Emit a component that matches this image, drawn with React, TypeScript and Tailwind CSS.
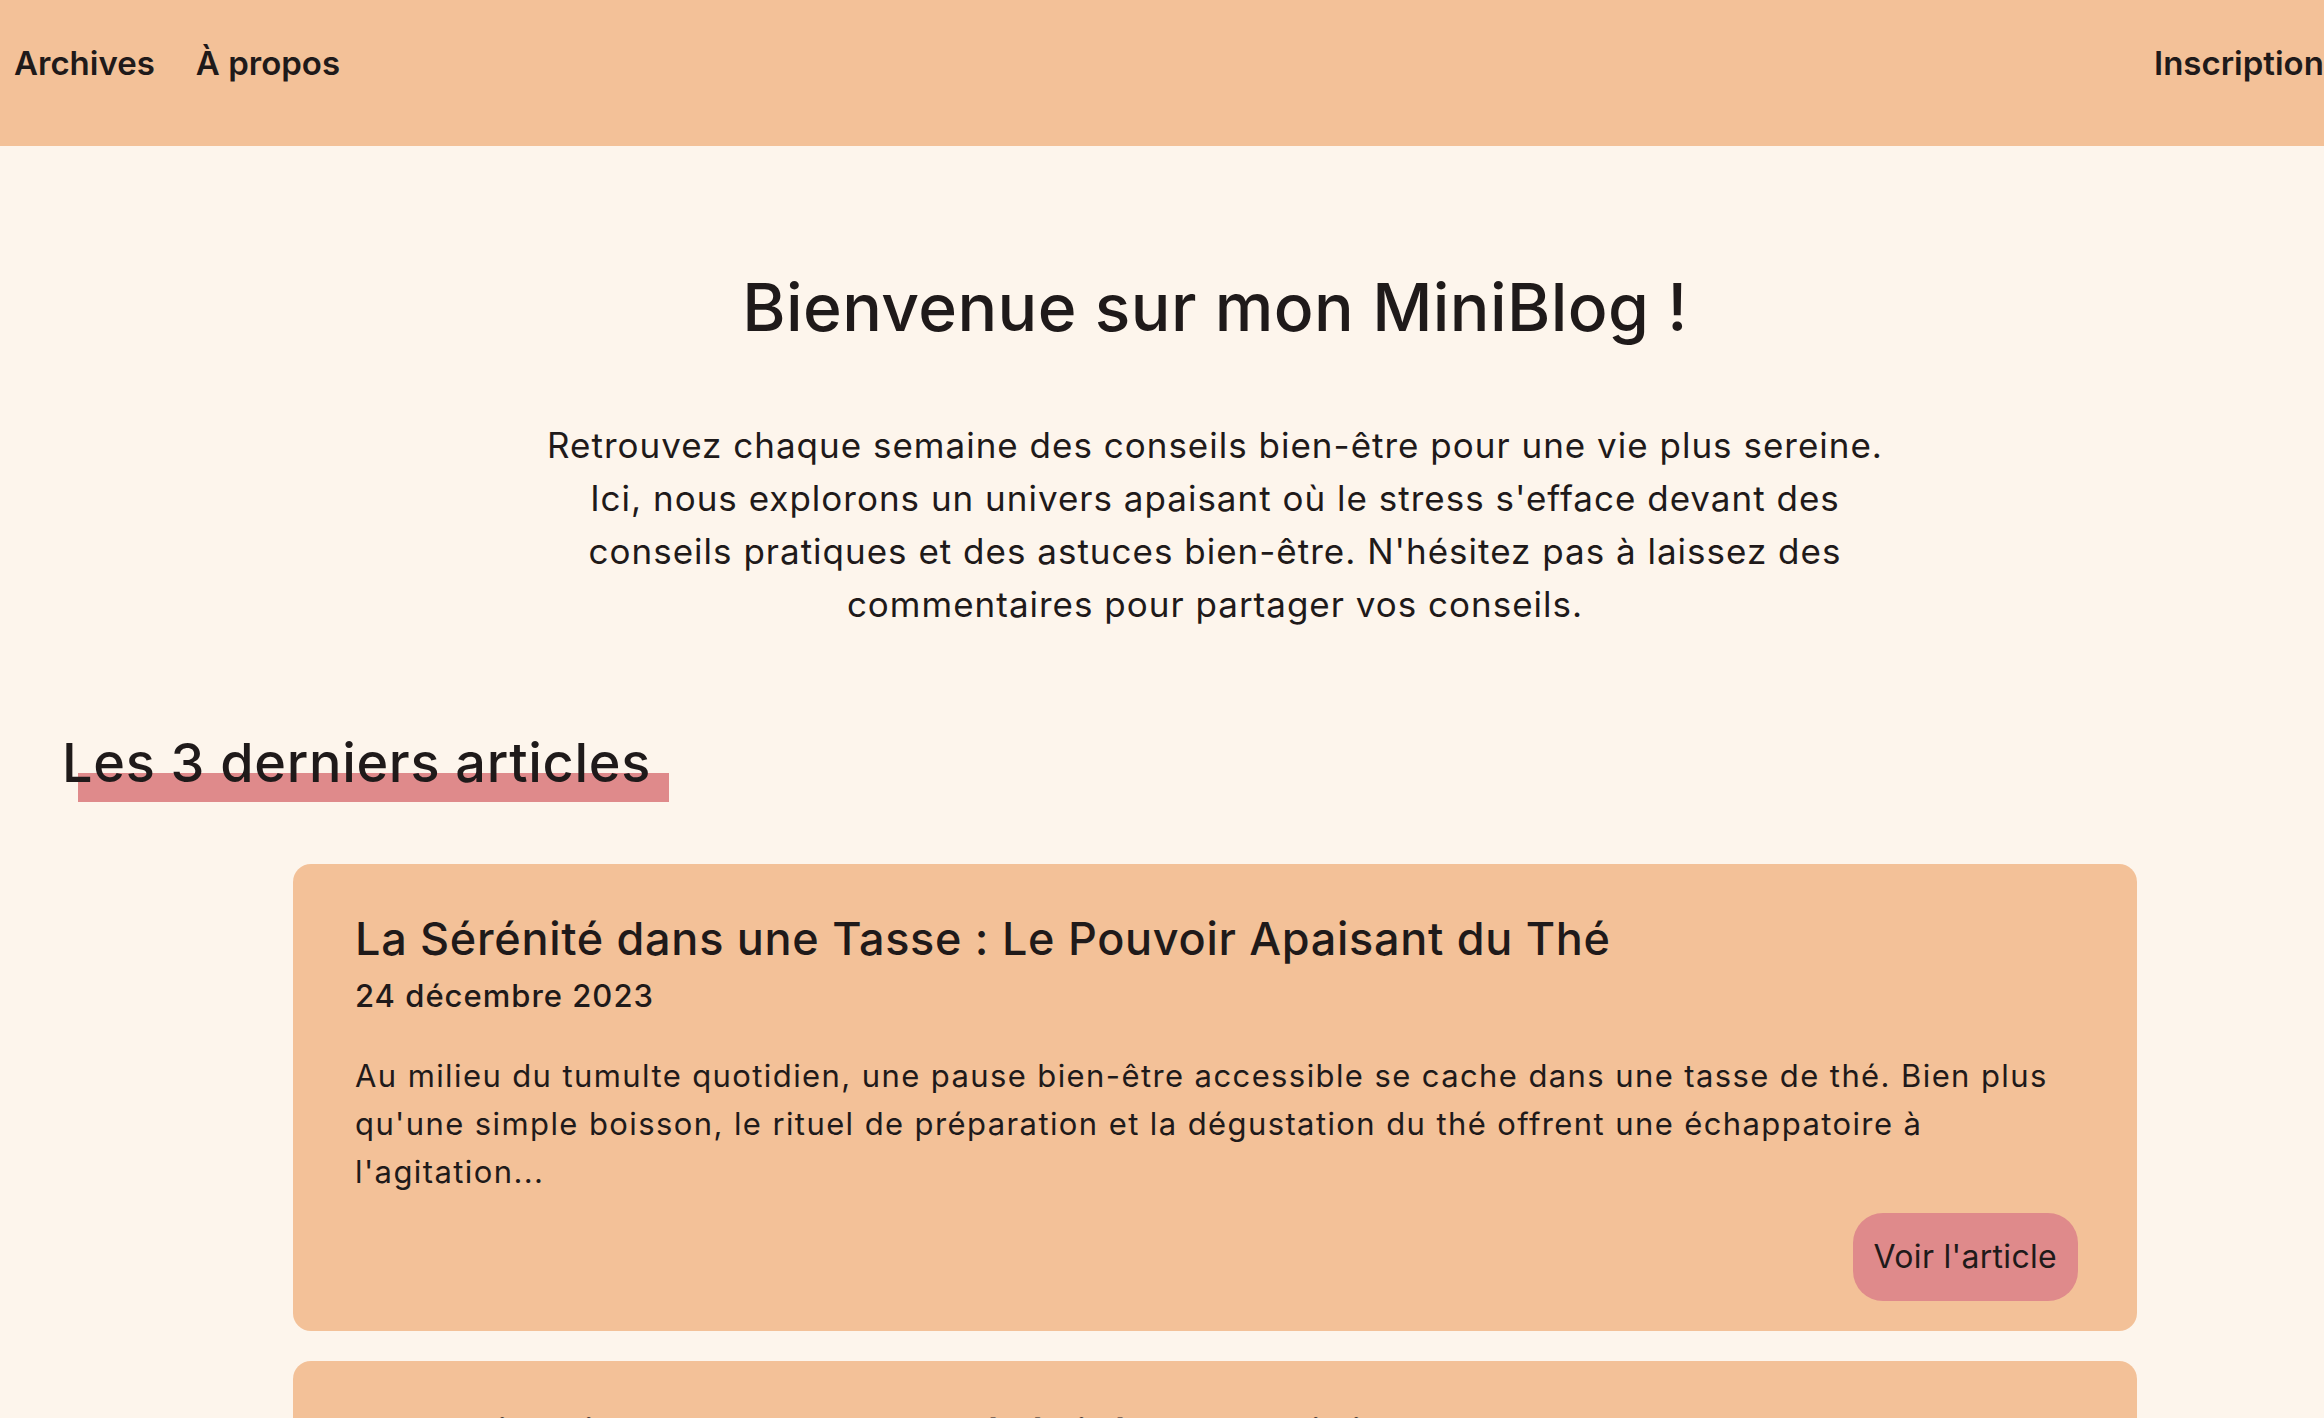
// Page d'accueil du MiniBlog - en-tête, introduction et derniers articles

const articles = [
  {
    id: 1,
    title: "La Sérénité dans une Tasse : Le Pouvoir Apaisant du Thé",
    date: "24 décembre 2023",
    excerpt:
      "Au milieu du tumulte quotidien, une pause bien-être accessible se cache dans une tasse de thé. Bien plus qu'une simple boisson, le rituel de préparation et la dégustation du thé offrent une échappatoire à l'agitation...",
  },
  {
    id: 2,
    title: "Conseils simples pour une sérénité au quotidien",
    date: "17 décembre 2023",
    excerpt:
      "Prendre soin de soi commence par de petites habitudes. Découvrez quelques gestes simples pour retrouver le calme et l'équilibre au fil des jours...",
  },
  {
    id: 3,
    title: "Respirer pour mieux vivre",
    date: "10 décembre 2023",
    excerpt:
      "La respiration est un outil puissant et souvent négligé. Quelques minutes par jour suffisent pour apaiser l'esprit...",
  },
];

export default function App() {
  return (
    <div className="w-full min-h-screen overflow-hidden bg-[#fdf5ec] text-[#1f1a1a] font-['Inter',sans-serif]">
      <div className="w-[2430px]">
        {/* En-tête */}
        <header className="h-[146px] bg-[#f3c198] flex items-start pt-[43px] pl-[14px]">
          <nav className="flex-1 flex gap-[41px] text-[33px] font-semibold leading-[40px]">
            <a href="#">Archives</a>
            <a href="#">À propos</a>
          </nav>
          <nav className="w-[276px] shrink-0 flex gap-[43px] text-[33px] font-semibold leading-[40px] whitespace-nowrap">
            <a href="#">Inscription</a>
            <a href="#">Connexion</a>
          </nav>
        </header>

        {/* Introduction */}
        <main>
          <h1 className="mt-[122px] text-center text-[66px] tracking-[0.4px] font-medium leading-[78px]">
            Bienvenue sur mon MiniBlog !
          </h1>
          <p className="mt-[73px] mx-auto max-w-[1350px] text-center text-[35px] tracking-[1px] leading-[53px]">
            Retrouvez chaque semaine des conseils bien-être pour une vie plus sereine. Ici, nous explorons un univers
            apaisant où le stress s'efface devant des conseils pratiques et des astuces bien-être. N'hésitez pas à
            laissez des commentaires pour partager vos conseils.
          </p>

          {/* Derniers articles */}
          <h2 className="mt-[101px] pl-[62px] text-[54px] tracking-[0.7px] font-medium leading-[62px]">
            <span className="relative inline-block">
              <span className="absolute left-[16px] -right-[18px] top-[41px] h-[29px] bg-[#df8a8b]" />
              <span className="relative">Les 3 derniers articles</span>
            </span>
          </h2>

          <div className="mt-[70px] mx-[293px] flex flex-col gap-[30px] pb-[40px]">
            {articles.map((article) => (
              <article
                key={article.id}
                className="bg-[#f3c198] rounded-[18px] pt-[49px] pb-[30px] pl-[62px] pr-[59px] flex flex-col"
              >
                <h3 className="text-[45px] tracking-[0.7px] font-medium leading-[52px]">{article.title}</h3>
                <p className="mt-[13px] text-[31px] tracking-[1px] font-medium leading-[36px]">{article.date}</p>
                <p className="mt-[38px] text-[31px] tracking-[1.4px] leading-[48px]">{article.excerpt}</p>
                <div className="mt-[17px] flex justify-end">
                  <button className="h-[88px] px-[21px] rounded-[30px] bg-[#df8a8b] text-[32px] tracking-[0.3px] leading-none">
                    Voir l'article
                  </button>
                </div>
              </article>
            ))}
          </div>
        </main>
      </div>
    </div>
  );
}
